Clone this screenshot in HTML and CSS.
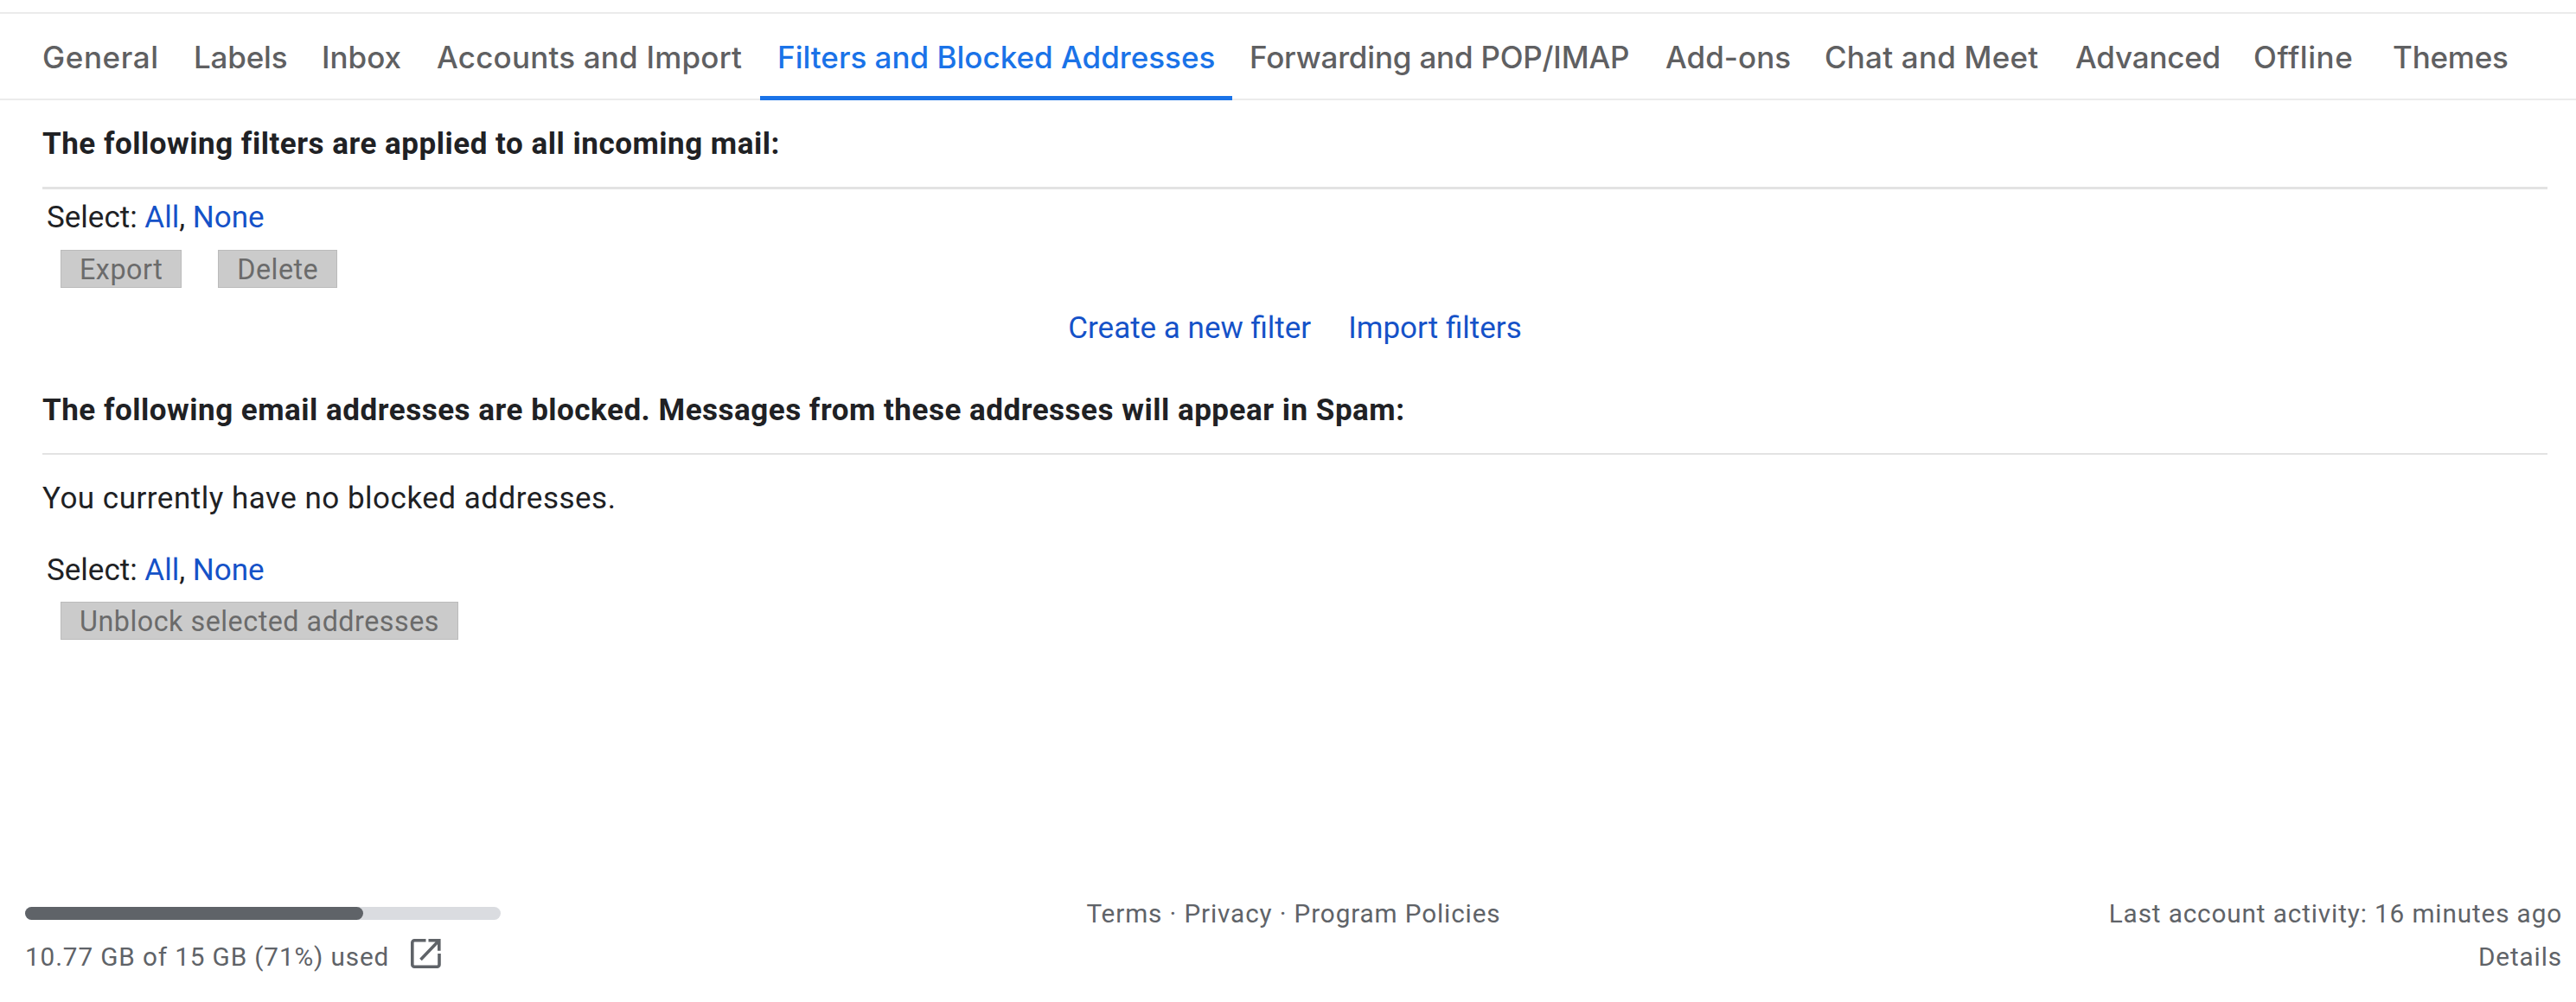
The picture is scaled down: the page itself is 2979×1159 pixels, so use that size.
FILE: index.html
```
<!DOCTYPE html>
<html lang="en">
<head>
  <meta charset="UTF-8">
  <meta name="viewport" content="width=device-width, initial-scale=1.0">
  <title>Settings - Filters and Blocked Addresses</title>
  <link rel="stylesheet" href="styles.css">
</head>
<body>

  <nav class="tabs">
    <a class="tab wide">General</a>
    <a class="tab tight">Labels</a>
    <a class="tab">Inbox</a>
    <a class="tab loose">Accounts and Import</a>
    <a class="tab active">Filters and Blocked Addresses</a>
    <a class="tab tight">Forwarding and POP/IMAP</a>
    <a class="tab">Add-ons</a>
    <a class="tab loose">Chat and Meet</a>
    <a class="tab tight">Advanced</a>
    <a class="tab wide">Offline</a>
    <a class="tab tight">Themes</a>
  </nav>

  <main class="settings">
    <!-- Filters -->
    <section class="filters">
      <h2>The following filters are applied to all incoming mail:</h2>
      <div class="select">Select: <a>All</a>, <a>None</a></div>
      <div class="buttons">
        <button disabled>Export</button>
        <button disabled>Delete</button>
      </div>
      <div class="links">
        <a>Create a new filter</a>
        <a>Import filters</a>
      </div>
    </section>

    <!-- Blocked addresses -->
    <section class="blocked">
      <h2>The following email addresses are blocked. Messages from these addresses will appear in Spam:</h2>
      <p class="empty">You currently have no blocked addresses.</p>
      <div class="select">Select: <a>All</a>, <a>None</a></div>
      <div class="buttons">
        <button disabled>Unblock selected addresses</button>
      </div>
    </section>
  </main>

  <footer class="foot">
    <div class="storage">
      <div class="bar"><div class="used"></div></div>
      <div class="usage">
        <span>10.77 GB of 15 GB (71%) used</span>
        <svg class="open-icon" viewBox="0 0 35 34" fill="none" stroke="#5f6368" stroke-width="3.6">
          <path d="M17.5 1.8H4.3a2.5 2.5 0 0 0-2.5 2.5v25.4a2.5 2.5 0 0 0 2.5 2.5h26.2a2.5 2.5 0 0 0 2.5-2.5V17"/>
          <path d="M20.5 1.8h12.3v11.9M32.3 2.2L11.5 24"/>
        </svg>
      </div>
    </div>
    <div class="terms">Terms · Privacy · Program Policies</div>
    <div class="activity">
      <div>Last account activity: 16 minutes ago</div>
      <div>Details</div>
    </div>
  </footer>

</body>
</html>
```

FILE: styles.css
```
* {
  box-sizing: border-box;
}

body {
  margin: 0;
  padding-top: 14px;
  background: #fff;
  color: #202124;
  font-family: Roboto, Arial, sans-serif;
  font-size: 35px;
  line-height: 42px;
}

/* Tabs */
.tabs {
  display: grid;
  grid-template-columns: 175px 148px 133px 394px 546px 481px 184px 290px 206px 161px 171px;
  height: 102px;
  padding-left: 29px;
  border-top: 2px solid #ebebeb;
  border-bottom: 2px solid #ebebeb;
}

.tab {
  display: flex;
  align-items: center;
  padding: 1px 0 0 20px;
  color: #5f6062;
  font-family: Inter, sans-serif;
  font-weight: 500;
  white-space: nowrap;
}

.tab.active {
  margin-bottom: -2px;
  padding-top: 4px;
  border-bottom: 5px solid #1a73e8;
  color: #1a73e8;
}

.tab.loose {
  letter-spacing: 0.2px;
}

.tab.wide {
  letter-spacing: 0.6px;
}

.tab.tight {
  letter-spacing: -0.2px;
}

/* Settings */
.settings {
  padding: 0 33px 0 49px;
}

h2 {
  margin: 0;
  padding: 30px 0 28px;
  font-size: 35px;
  font-weight: 700;
  letter-spacing: 0.51px;
  border-bottom: 2px solid #e3e3e3;
}

.filters h2 {
  border-bottom-width: 3px;
}

.select {
  padding: 12px 0 0 5px;
}

.select a,
.links a {
  color: #1552c8;
}

.buttons {
  display: flex;
  gap: 42px;
  padding: 16px 0 0 21px;
}

button {
  height: 44px;
  padding: 1px 21px 0;
  border: 1px solid #bbb;
  background: #cbcbcb;
  color: #6b6b6b;
  font-family: inherit;
  font-size: 32.3px;
  letter-spacing: 0.5px;
  line-height: 40px;
}

.links {
  display: flex;
  justify-content: center;
  gap: 43px;
  padding-top: 26px;
}

.blocked {
  padding-top: 23px;
}

.empty {
  margin: 30px 0 29px;
  letter-spacing: 0.5px;
}

.blocked .buttons {
  padding-top: 15px;
}

/* Footer */
.foot {
  display: grid;
  grid-template-columns: 1fr auto 1fr;
  margin-top: 292px;
  padding: 0 16px 0 29px;
  color: #5f6368;
  font-size: 29.7px;
  letter-spacing: 0.88px;
  line-height: 50px;
}

.bar {
  width: 550px;
  height: 15px;
  margin: 17px 0 18px;
  border-radius: 8px;
  background: #dadce0;
}

.used {
  width: 71%;
  height: 100%;
  border-radius: 8px;
  background: #5f6368;
}

.usage {
  display: flex;
  gap: 25px;
}

.open-icon {
  width: 35px;
  height: 34px;
  margin-top: 4px;
}

.activity {
  text-align: right;
}
```
